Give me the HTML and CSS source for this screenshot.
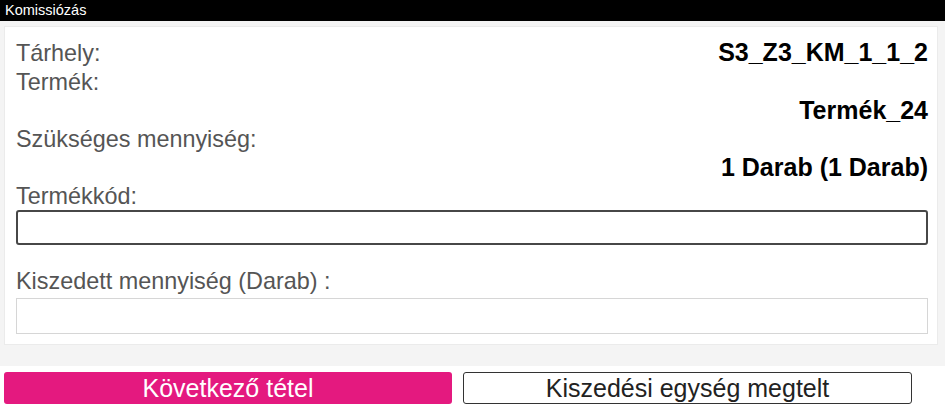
FILE: index.html
```html
<!DOCTYPE html>
<html lang="hu">
<head>
    <meta charset="UTF-8">
    <meta name="viewport" content="width=device-width, initial-scale=1.0">
    <title>Komissiózás</title>
    <link rel="stylesheet" href="styles.css">
</head>
<body>
    <div class="header">Komissiózás</div>

    <div class="content">
        <div class="card">
            <div class="row">
                <span class="label">Tárhely:</span>
                <span class="value">S3_Z3_KM_1_1_2</span>
            </div>
            <div class="label">Termék:</div>
            <div class="value">Termék_24</div>
            <div class="label">Szükséges mennyiség:</div>
            <div class="value">1 Darab (1 Darab)</div>

            <label class="label" for="productCode">Termékkód:</label>
            <input type="text" id="productCode" class="input-focus">

            <label class="label label-spaced" for="pickedQty">Kiszedett mennyiség (Darab) :</label>
            <input type="text" id="pickedQty" class="input-plain">
        </div>
    </div>

    <div class="actions">
        <button class="btn btn-primary">Következő tétel</button>
        <button class="btn btn-secondary">Kiszedési egység megtelt</button>
    </div>
</body>
</html>
```

FILE: styles.css
```css
body {
    font-family: "Liberation Sans", Arial, sans-serif;
    margin: 0;
    padding: 0;
    background-color: #fff;
}

.header {
    background-color: #000;
    color: #fff;
    font-size: 14.5px;
    height: 21px;
    line-height: 21px;
    padding: 0 5px;
}

.content {
    background-color: #f4f4f4;
    padding: 5px 7px 21px 4px;
}

.card {
    background-color: #fff;
    border: 1px solid #ebebeb;
    padding: 11px 9px 10px 11px;
}

.row {
    display: flex;
    justify-content: space-between;
    align-items: baseline;
}

.label {
    display: block;
    font-size: 23.4px;
    line-height: 28.5px;
    color: #555;
}

.label-spaced {
    margin-top: 21.5px;
}

.value {
    font-size: 25px;
    font-weight: bold;
    line-height: 28.5px;
    text-align: right;
    color: #000;
}

input[type="text"] {
    display: block;
    box-sizing: border-box;
    width: 100%;
    margin: 0;
    padding: 4px 8px;
    font-size: 20px;
    font-family: inherit;
    background: #fff;
    outline: none;
}

.input-focus {
    height: 35px;
    border: 2px solid #474747;
    border-radius: 3px;
}

.input-plain {
    height: 36px;
    margin-top: 3px !important;
    border: 1px solid #d6d6d6;
    border-radius: 0;
}

.actions {
    display: flex;
    gap: 11px;
    padding: 6px 0 0 4px;
}

.btn {
    height: 32px;
    padding: 0;
    font-family: inherit;
    font-size: 25px;
    border-radius: 3px;
    cursor: pointer;
}

.btn-primary {
    width: 448px;
    background-color: #e4197f;
    color: #fff;
    border: none;
}

.btn-secondary {
    width: 449px;
    background-color: #fff;
    color: #222;
    border: 1px solid #333;
}
```
